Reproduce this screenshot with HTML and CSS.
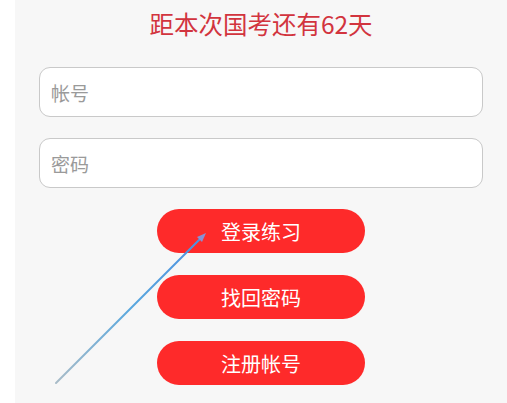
FILE: index.html
```html
<!DOCTYPE html>
<html lang="zh">
<head>
<meta charset="utf-8">
<link rel="stylesheet" href="styles.css">
</head>
<body>
<div class="page">
  <div class="strip"></div>
  <main class="main">
    <h1 class="title">距本次国考还有62天</h1>
    <div class="field"><input class="input" type="text" placeholder="帐号"></div>
    <div class="field"><input class="input" type="password" placeholder="密码"></div>
    <div class="buttons">
      <button class="btn">登录练习</button>
      <button class="btn">找回密码</button>
      <button class="btn">注册帐号</button>
    </div>
  </main>
  <svg class="annot" width="507" height="403" viewBox="0 0 507 403">
    <defs>
      <linearGradient id="g" x1="56" y1="383" x2="205" y2="234" gradientUnits="userSpaceOnUse">
        <stop offset="0" stop-color="#a9bcc8"/>
        <stop offset="0.5" stop-color="#5aa8de"/>
        <stop offset="1" stop-color="#4c8fe0"/>
      </linearGradient>
    </defs>
    <line x1="56" y1="383" x2="201" y2="238" stroke="url(#g)" stroke-width="2" stroke-linecap="round"/>
    <polygon points="206,233 197,237 202,242" fill="#8a90d4"/>
  </svg>
</div>
</body>
</html>
```
FILE: styles.css
```css
html, body {
  margin: 0;
  padding: 0;
  background: #f7f7f7;
  overflow: hidden;
  font-family: "Noto Sans CJK SC", "Noto Sans", sans-serif;
}
.page {
  position: relative;
  display: flex;
  width: 100%;
  height: 403px;
  overflow: hidden;
  background: #f7f7f7;
}
.strip {
  width: 15px;
  flex: none;
  background: #ffffff;
}
.main {
  flex: 1;
  padding: 0 24px;
  display: flex;
  flex-direction: column;
}
.title {
  margin: 0;
  height: 47px;
  line-height: 47px;
  font-size: 24.5px;
  font-weight: 400;
  color: #d2343e;
  text-align: center;
}
.field {
  margin-top: 20px;
}
.field + .field {
  margin-top: 21px;
}
.input {
  box-sizing: border-box;
  width: 100%;
  height: 50px;
  border: 1px solid #c9c9c9;
  border-radius: 11px;
  background: #ffffff;
  padding: 0 11px;
  font-family: "Noto Sans CJK SC", "Noto Sans", sans-serif;
  font-size: 19px;
  color: #333;
  outline: none;
}
.input::placeholder {
  color: #9a9a9a;
}
.buttons {
  margin-top: 21px;
  display: flex;
  flex-direction: column;
  align-items: center;
  gap: 22px;
}
.btn {
  width: 208px;
  height: 44px;
  border: none;
  border-radius: 22px;
  background: #fe2a2a;
  color: #ffffff;
  font-family: "Noto Sans CJK SC", "Noto Sans", sans-serif;
  font-size: 20px;
  padding: 0;
}
.annot {
  position: absolute;
  left: 0;
  top: 0;
  pointer-events: none;
}
```
